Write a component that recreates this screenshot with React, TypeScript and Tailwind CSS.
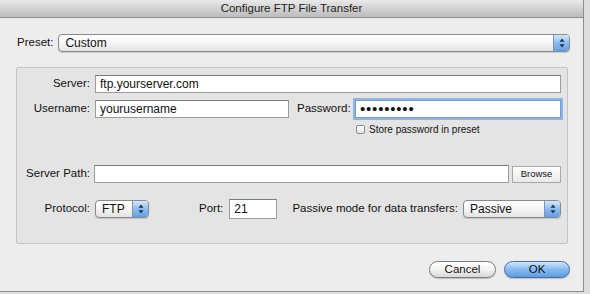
import React from "react";

const font = { fontFamily: '"Liberation Sans", Arial, sans-serif' };

function Stepper() {
  return (
    <svg width="6" height="10" viewBox="0 0 6 10" className="block">
      <path d="M3 0.5 L5.5 3.8 H0.5 Z" fill="#1f2f4a" />
      <path d="M3 9.5 L5.5 6.2 H0.5 Z" fill="#1f2f4a" />
    </svg>
  );
}

function PopUp({ value, className }: { value: string; className: string }) {
  return (
    <div
      className={`flex h-[18px] items-stretch overflow-hidden rounded-[4px] border border-[#8a8a8a] bg-gradient-to-b from-white via-[#f6f6f6] to-[#e2e2e2] shadow-[0_1px_1px_rgba(0,0,0,0.15)] ${className}`}
    >
      <span className="flex-1 truncate pl-[6px] text-[12px] leading-[16px] text-[#111]">{value}</span>
      <span className="flex w-[16px] items-center justify-center border-l border-[#7d93b3] bg-gradient-to-b from-[#d6e8fb] via-[#8cbcf0] to-[#5f9fe6]">
        <Stepper />
      </span>
    </div>
  );
}

function Field({ value, className, focused }: { value: string; className: string; focused?: boolean }) {
  return (
    <div
      className={`h-[18px] border bg-white pl-[4px] text-[12px] leading-[16px] text-[#111] ${
        focused
          ? "border-[#6f9fd8] shadow-[0_0_0_2px_rgba(110,160,225,0.7)]"
          : "border-[#9c9c9c] border-t-[#7a7a7a]"
      } ${className}`}
    >
      {value}
    </div>
  );
}

export default function App() {
  return (
    <div className="flex h-[294px] w-[590px] bg-[#dedede]" style={font}>
      <div className="flex h-[292px] w-[584px] flex-col border-r border-b border-[#8e8e8e] bg-[#ededed]">
        {/* title bar */}
        <div className="flex h-[18px] items-center justify-center border-b border-[#8f8f8f] bg-gradient-to-b from-[#e9e9e9] to-[#bcbcbc] text-[11.5px] text-[#222]">
          Configure FTP File Transfer
        </div>

        <div className="flex flex-col pl-[16px] pr-[13px]">
          {/* preset */}
          <div className="mt-[16px] flex items-center gap-[5px] pl-[1px]">
            <span className="text-[11.5px] text-[#111]">Preset:</span>
            <PopUp value="Custom" className="flex-1" />
          </div>

          {/* group box */}
          <div className="mt-[15px] mr-[2px] flex h-[177px] flex-col rounded-[2px] border border-[#c4c4c4] bg-[#e4e4e4] pr-[6px] pt-[7px] text-[11.5px] text-[#111]">
            <div className="flex items-center">
              <span className="w-[73px] text-right">Server:</span>
              <Field value="ftp.yourserver.com" className="ml-[5px] flex-1" />
            </div>

            <div className="mt-[7px] flex items-center">
              <span className="w-[73px] text-right">Username:</span>
              <Field value="yourusername" className="ml-[5px] w-[194px]" />
              <span className="ml-[8px] w-[51px] text-right">Password:</span>
              <Field value="•••••••••" className="ml-[7px] flex-1 text-[15px] tracking-[0.8px]" focused />
            </div>

            <div className="mt-[4px] flex items-center pl-[339px] text-[10px]">
              <span className="h-[9px] w-[9px] rounded-[2px] border border-[#8c8c8c] bg-gradient-to-b from-white to-[#e6e6e6]" />
              <span className="ml-[4px]">Store password in preset</span>
            </div>

            <div className="mt-[28px] flex items-center">
              <span className="w-[73px] text-right">Server Path:</span>
              <Field value="" className="ml-[4px] flex-1" />
              <div className="ml-[3px] flex h-[17px] w-[49px] items-center justify-center border border-[#a9a9a9] bg-gradient-to-b from-white to-[#e9e9e9] text-[9.5px]">
                Browse
              </div>
            </div>

            <div className="mt-[16px] flex items-center">
              <span className="w-[73px] text-right">Protocol:</span>
              <PopUp value="FTP" className="ml-[5px] w-[54px]" />
              <span className="ml-[50px]">Port:</span>
              <Field value="21" className="ml-[6px] h-[20px] w-[48px] leading-[18px]" />
              <span className="ml-[10px] mr-[5px] flex-1 text-right">Passive mode for data transfers:</span>
              <PopUp value="Passive" className="w-[98px]" />
            </div>
          </div>

          {/* buttons */}
          <div className="mt-[17px] flex justify-end gap-[8px]">
            <div className="flex h-[17px] w-[67px] items-center justify-center rounded-full border border-[#7b7b7b] bg-gradient-to-b from-white via-[#f3f3f3] to-[#d9d9d9] text-[11.5px] text-[#111] shadow-[0_1px_1px_rgba(0,0,0,0.2)]">
              Cancel
            </div>
            <div className="flex h-[17px] w-[66px] items-center justify-center rounded-full border border-[#4a6d9c] bg-gradient-to-b from-[#cfe5fb] via-[#84b9ef] to-[#5a9ee6] text-[11.5px] text-[#111] shadow-[0_1px_1px_rgba(0,0,0,0.2)]">
              OK
            </div>
          </div>
        </div>
      </div>
    </div>
  );
}
